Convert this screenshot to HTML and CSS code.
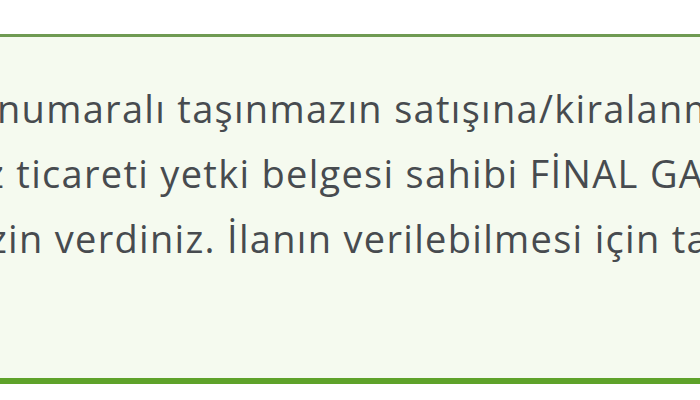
FILE: index.html
```html
<!DOCTYPE html>
<html lang="tr">
<head>
<meta charset="utf-8">
<link rel="stylesheet" href="styles.css">
</head>
<body>
<div class="notice">
  <div class="line line-1">numaralı taşınmazın satışına/kiralanmasına</div>
  <div class="line line-2">z ticareti yetki belgesi sahibi FİNAL GAYRİMENKUL</div>
  <div class="line line-3">zin verdiniz. İlanın verilebilmesi için taşınmaz</div>
</div>
</body>
</html>
```
FILE: styles.css
```css
html, body {
  margin: 0;
  padding: 0;
  background: #ffffff;
  overflow: hidden;
}
.notice {
  margin-top: 34px;
  box-sizing: border-box;
  height: 350px;
  border-top: 3px solid #6f9a52;
  border-bottom: 6px solid #5ea22a;
  background: #f5faef;
  padding-top: 39px;
  overflow: hidden;
  font-family: "Open Sans", "DejaVu Sans", sans-serif;
  font-size: 38px;
  letter-spacing: 1.3px;
  line-height: 65px;
  color: #474b4f;
}
.line {
  white-space: nowrap;
}
.line-1 {
  margin-left: -3px;
}
.line-2 {
  margin-left: -14px;
}
.line-3 {
  margin-left: -11px;
}
```
